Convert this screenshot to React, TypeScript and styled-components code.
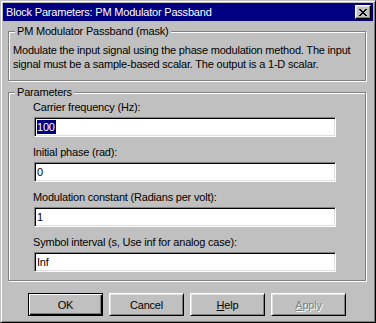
import React from 'react';
import styled, { createGlobalStyle } from 'styled-components';

const GlobalStyle = createGlobalStyle`
  html, body {
    margin: 0;
    padding: 0;
    background: #c0c0c0;
  }
  * {
    box-sizing: border-box;
  }
`;

const Window = styled.div`
  width: 376px;
  height: 323px;
  background: #c0c0c0;
  border: 1px solid;
  border-color: #c0c0c0 #000 #000 #c0c0c0;
  box-shadow: inset 1px 1px #fff, inset -1px -1px #808080;
  padding: 2px;
  display: flex;
  flex-direction: column;
  font-family: 'Liberation Sans', Arial, sans-serif;
  font-size: 11px;
  letter-spacing: -0.2px;
  color: #000;
`;

const TitleBar = styled.div`
  height: 18px;
  background: #000080;
  color: #fff;
  display: flex;
  align-items: center;
  justify-content: space-between;
  padding: 0 2px 0 3px;
  font-size: 11px;
`;

const TitleText = styled.span`
  line-height: 18px;
`;

const CloseButton = styled.div`
  width: 16px;
  height: 14px;
  background: #c0c0c0;
  border: 1px solid;
  border-color: #fff #000 #000 #fff;
  box-shadow: inset -1px -1px #808080, inset 1px 1px #dfdfdf;
  display: flex;
  align-items: center;
  justify-content: center;
`;

const Body = styled.div`
  flex: 1;
  display: flex;
  flex-direction: column;
  padding: 10px 7px 0 5px;
`;

const Group = styled.div<{ gap?: number }>`
  position: relative;
  border: 1px solid #808080;
  box-shadow: inset 1px 1px #fff, 1px 1px #fff;
  margin-top: ${({ gap }) => gap ?? 0}px;
`;

const Legend = styled.span`
  position: absolute;
  left: 6px;
  top: -8px;
  padding: 0 2px;
  line-height: 14px;
  background: #c0c0c0;
`;

const Description = styled.p`
  margin: 0;
  padding: 11px 0 9px 4px;
  line-height: 14px;
  white-space: nowrap;
`;

const Fields = styled.div`
  display: flex;
  flex-direction: column;
  gap: 8px;
  padding: 7px 0 8px 24px;
`;

const Field = styled.div`
  display: flex;
  flex-direction: column;
  gap: 3px;
`;

const Label = styled.label`
  line-height: 14px;
`;

const Input = styled.div`
  margin-left: 1px;
  width: 302px;
  height: 20px;
  background: #fff;
  border: 1px solid;
  border-color: #808080 #fff #fff #808080;
  box-shadow: inset 1px 1px #000, inset -1px -1px #dfdfdf;
  padding: 0 2px;
  display: flex;
  align-items: center;
  line-height: 14px;
`;

const Selected = styled.span`
  background: #000080;
  color: #fff;
`;

const Caret = styled.span`
  display: inline-block;
  width: 1px;
  height: 14px;
  background: #000;
`;

const ButtonRow = styled.div`
  display: flex;
  justify-content: center;
  gap: 6px;
  margin-top: 12px;
`;

const Button = styled.div<{ isDefault?: boolean; disabled?: boolean }>`
  width: 75px;
  height: 23px;
  display: flex;
  align-items: center;
  justify-content: center;
  background: #c0c0c0;
  border: 1px solid;
  border-color: ${({ isDefault }) =>
    isDefault ? '#000' : '#fff #000 #000 #fff'};
  box-shadow: ${({ isDefault }) =>
    isDefault
      ? 'inset 1px 1px #fff, inset -1px -1px #000, inset -2px -2px #808080'
      : 'inset 1px 1px #dfdfdf, inset -1px -1px #808080'};
  color: ${({ disabled }) => (disabled ? '#808080' : '#000')};
  text-shadow: ${({ disabled }) => (disabled ? '1px 1px #fff' : 'none')};
`;

const Mnemonic = styled.span`
  text-decoration: underline;
`;

const fields = [
  { label: 'Carrier frequency (Hz):', value: '100', selected: true },
  { label: 'Initial phase (rad):', value: '0' },
  { label: 'Modulation constant (Radians per volt):', value: '1' },
  { label: 'Symbol interval (s, Use inf for analog case):', value: 'Inf' },
];

export default function App() {
  return (
    <>
      <GlobalStyle />
      <Window>
        <TitleBar>
          <TitleText>Block Parameters: PM Modulator Passband</TitleText>
          <CloseButton>
            <svg width="8" height="7" viewBox="0 0 8 7" shapeRendering="crispEdges">
              <path
                d="M0 0h2v1h1v1h2V1h1V0h2v1H7v1H6v1H5v1h1v1h1v1h1v1H6V6H5V5H3v1H2v1H0V6h1V5h1V4h1V3H2V2H1V1H0z"
                fill="#000"
              />
            </svg>
          </CloseButton>
        </TitleBar>
        <Body>
          <Group>
            <Legend>PM Modulator Passband (mask)</Legend>
            <Description>
              Modulate the input signal using the phase modulation method. The input
              <br />
              signal must be a sample-based scalar. The output is a 1-D scalar.
            </Description>
          </Group>
          <Group gap={11}>
            <Legend>Parameters</Legend>
            <Fields>
              {fields.map((f) => (
                <Field key={f.label}>
                  <Label>{f.label}</Label>
                  <Input>
                    {f.selected ? (
                      <>
                        <Selected>{f.value}</Selected>
                        <Caret />
                      </>
                    ) : (
                      f.value
                    )}
                  </Input>
                </Field>
              ))}
            </Fields>
          </Group>
          <ButtonRow>
            <Button isDefault>OK</Button>
            <Button>Cancel</Button>
            <Button>
              <span>
                <Mnemonic>H</Mnemonic>elp
              </span>
            </Button>
            <Button disabled>
              <span>
                <Mnemonic>A</Mnemonic>pply
              </span>
            </Button>
          </ButtonRow>
        </Body>
      </Window>
    </>
  );
}
